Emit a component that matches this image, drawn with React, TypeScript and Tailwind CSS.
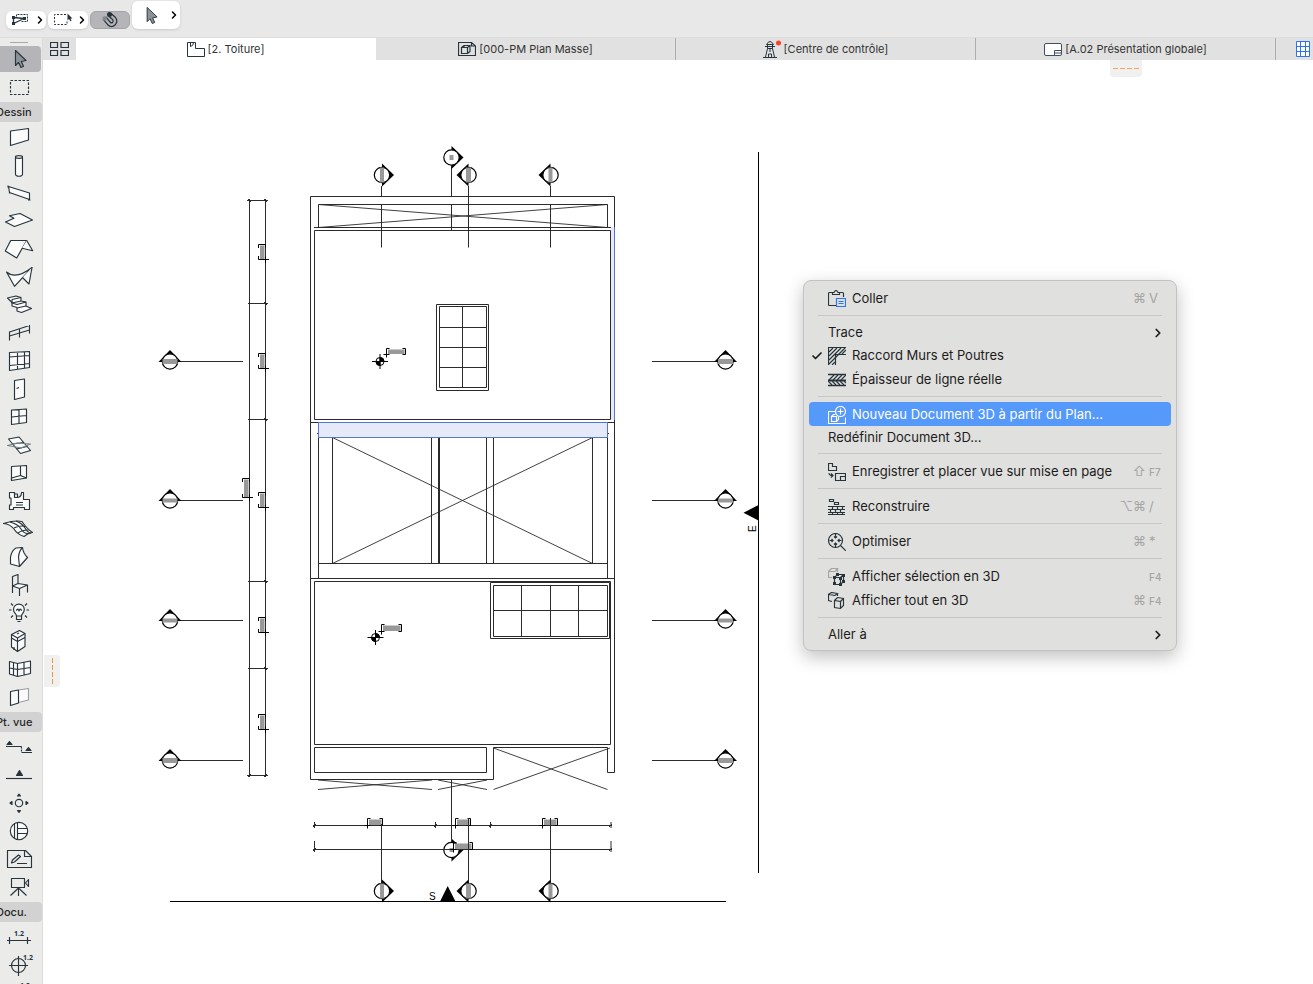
import type { ReactNode } from 'react'
import clsx from 'clsx'
import { ChevronRight, Check } from 'lucide-react'

const INK = '#27343b'

type Tool = { name: string; art: ReactNode; active?: boolean }

const arrowPath = 'M15.5 5.5V20.5L18.5 17.5L21 22.5L23.5 21.3L21.3 16.5L26 15.5Z'

const mainTools: Tool[] = [
  { name: 'Flèche', active: true, art: <path d={arrowPath} fill="#8b9398" /> },
  { name: 'Rectangle de sélection', art: <rect x="10.5" y="7.5" width="18" height="14" fill="none" strokeDasharray="2.5 1.5" /> }
]

const drawTools: Tool[] = [
  { name: 'Mur', art: <path d="M10.5 8L28.5 5.5V17L10.5 22.5Z" /> },
  { name: 'Poteau', art: <><path d="M15.5 6V23C15.5 26 22.5 26 22.5 23V6" /><ellipse cx="19" cy="6" rx="3.5" ry="1.4" /></> },
  { name: 'Poutre', art: <path d="M8.5 7.5L29.5 14V20.5L9.5 13.5ZM8 6.5V8.5M9.5 12.5V14.5M28 21H30.5" /> },
  { name: 'Dalle', art: <path d="M5.5 15L14.5 19.5L32.5 13L20 6.5L9.5 8.7L14 11.3Z" /> },
  { name: 'Toit', art: <><path d="M5.3 16L10.7 5.5H26.7L16.7 23Z" /><path d="M26.7 5.5L32.7 15.7L22 13.3" /></> },
  { name: 'Coque', art: <><path d="M6.5 9L14.5 23.3L32 4.5Q16 17 6.5 9Z" /><path d="M32 4.5L29 21L22.5 14.5" /></> },
  { name: 'Escalier', art: <><path d="M7.5 7L16 5L21 6.5V10L26 11V15L31.5 17.5L21.5 21.5L17 20V16.5L12 15V11.5L7.5 7Z" /><path d="M12 8.5L21 6.5M12 12L21 10M17 13.5L26 11M17 17L26 15M12 8.5V12L17 13.5" fill="none" /></> },
  { name: 'Garde-corps', art: <path d="M9.5 13L29.5 6.5M9.5 17L29.5 11M9.5 12.5V21.5M19.5 10V18.5M29.5 6V14.5" fill="none" /> },
  { name: 'Mur-rideau', art: <path d="M9.5 5.5L29.5 4.5V20.5L9.5 23.5ZM17.5 5V22M24.5 5V21M9.5 10L29.5 8.5M9.5 18.5L29.5 16.5" /> },
  { name: 'Porte', art: <path d="M14.5 5.5L24.5 4V22L14.5 24.5ZM16.5 13.5L19 12.5" /> },
  { name: 'Fenêtre', art: <path d="M11.5 7L26.5 6V19.5L11.5 21.5ZM19 6.5V20.5M11.5 14L26.5 12.5" /> },
  { name: 'Fenêtre de toit', art: <><path d="M8.5 8L19 6L30.5 19.5L20.5 22.5Z" /><path d="M12.5 13L24 11.5M16.5 18L27 15.5" fill="none" /><path d="M7.5 14.5L17 12L30.5 13L21 17Z" fill="none" stroke="#79848a" /></> },
  { name: 'Ouverture', art: <><path d="M11.5 7.5L26.5 6.5V19L11.5 21.5Z" /><path d="M20.5 7V16.5L11.5 19V21.5M20.5 16.5L26.5 19" fill="none" /></> },
  { name: 'Zone', art: <><path d="M9.5 5.5H14.5V10.500H17.500Q21.500 10 21.500 5.500H23.5V12.5H29.5V22.5H24.5V20.5H13.5V22.5H9.5V18H11V11H9.5Z" /><path d="M14.500 5.500V7H17.500V10.500M16 15.5H23M16 18H23" fill="none" /></> },
  { name: 'Maillage', art: <><path d="M3.5 8.5Q15 5 22 6.5Q27 14 32.5 17.5Q28 18 24 21.5Q17 19 14 14Q10 9 3.5 8.5Z" /><path d="M10 7Q18 9 21 14T28.5 18.5M16 6Q22 8 25 13T31 18M14 13Q20 10 25.5 11.5M18 18Q22 15 28.5 15" fill="none" /></> },
  { name: 'Forme', art: <><path d="M10.5 21V14Q12 7 16 5L22.5 4.5Q23 10 27.5 14.5L19.5 23.5Z" /><path d="M19.5 23.5L18.5 14Q19 8 22.5 4.5" fill="none" /></> },
  { name: 'Objet', art: <><path d="M12.5 15L18 12.500L27.500 14L19.500 17.500Z" /><path d="M12.500 22V5.500L18 3.500V12.500M19.5 17.5V25M27.5 14V21.5" fill="none" /></> },
  { name: 'Lampe', art: <><path d="M16.5 17C16.5 14.5 13.5 14 13.5 10.5A5.3 5.3 0 0 1 24.3 10.5C24.3 14 21.5 14.5 21.5 17Z" /><path d="M16.500 17V20.500H21.500V17M17.5 22.500H20.5M16 11.5L18 10L19 12L20 10L22 11.5M9 11H11.5M26.5 11H29M11 4.5L13 6.5M27 4.5L25 6.5M11 18.5L13 16.5M27 18.5L25 16.5" fill="none" /></> },
  { name: 'Équipement', art: <><path d="M11.5 7.5L19.5 3.5L25 6.5V19.5L17.5 24.5L11.5 20Z" /><path d="M11.5 7.5L17.5 11V24.5M17.5 11L25 6.5M11.5 11L17.5 14.5L25 10.5M17 7L19 6M14 20V23" fill="none" /></> },
  { name: 'Fenêtre d’angle', art: <path d="M9.5 6.5L17.5 8.5L30.5 6V18.5L17.5 21.5L9.5 19ZM17.5 8.5V21.5M13.5 7.5V20M24 7.5V20M9.5 13L17.5 14.5L30.5 12.5" /> },
  { name: 'Extrémité de mur', art: <><path d="M18.5 7L28.5 5.5V17L18.5 19.5" stroke="#98a0a4" /><path d="M10.5 8.5L18.5 7V20L10.5 22.5Z" /></> }
]

const viewTools: Tool[] = [
  { name: 'Coupe', art: <><path d="M6 13.5H21.5M21.5 19.5H32" /><path d="M21.5 13.5V19.5" strokeDasharray="2 1" /><path d="M7 11.5H12L9.5 8.5ZM26 17.5H31L28.5 14.5Z" fill={INK} /></> },
  { name: 'Façade', art: <><path d="M6 17.5H32" /><path d="M16.5 14.5H22.5L19.5 9.5Z" fill={INK} /></> },
  { name: 'Élévation intérieure', art: <><circle cx="19" cy="14" r="3.7" fill="none" /><path d="M17.5 7H20.5L19 5ZM17.5 21.5H20.5L19 23.5ZM12 12.5V15.5L10 14ZM26 12.5V15.5L28 14Z" fill={INK} /></> },
  { name: 'Détail', art: <><circle cx="19" cy="14" r="8.7" /><path d="M14.5 6.5V21.5M17.5 5.5V22.5M17.5 11.5H27.5M17.5 16.5H27.5" fill="none" /></> },
  { name: 'Feuille', art: <><path d="M7.5 5.5H25.5L31.5 11.5V22.5H7.5Z" fill="none" /><path d="M24.5 6V11.5H31M11.5 18L12.5 15L18.5 10L20.5 11.5L14.5 17ZM17 18.5H27" fill="none" /></> },
  { name: 'Caméra', art: <><path d="M11.5 5.5H24.5V14.5H11.5ZM28.5 6.5V13.5L25.5 10Z" fill="none" /><path d="M18.5 14.5V23M18.5 15L10.5 22.5M18.5 15L26.5 22.5" /></> }
]

const docTools: Tool[] = [
  { name: 'Cotation', art: <><path d="M7 17.5H31M9.5 14V21M27.5 14V21" /><Digits x={14} y={13} /></> },
  { name: 'Cote de niveau', art: <><circle cx="18.5" cy="14.5" r="7" fill="none" /><path d="M9 14.5H28M18.5 5V25" /><Digits x={23} y={9} /></> },
  { name: 'Cote radiale', art: <><Digits x={20} y={9} /><path d="M10 14H28" /></> }
]

function Digits({ x, y }: { x: number; y: number }) {
  return <text x={x} y={y} fill={INK} stroke="none" className="font-sans text-[7px] font-bold">1.2</text>
}

function ToolButton({ tool }: { tool: Tool }) {
  return (
    <button aria-label={tool.name} className="block h-7 w-full py-px">
      <span className={clsx('block h-[26px] w-[41px] rounded-r', tool.active && 'bg-[#b5b4b9]')}>
        <svg viewBox="0 1 40 26" className="h-[26px] w-10" fill="#fbfbfb" stroke={INK} strokeWidth="1.15" strokeLinejoin="round">
          {tool.art}
        </svg>
      </span>
    </button>
  )
}

function ToolGroup({ title, tools }: { title?: string; tools: Tool[] }) {
  return (
    <section>
      {title && (
        <h2 className="my-px flex h-5 w-[42px] items-center overflow-hidden rounded-r bg-[#d2d2d2] text-[11px] font-medium whitespace-nowrap text-[#262626]">
          <span className="-ml-1">{title}</span>
        </h2>
      )}
      {tools.map((tool) => <ToolButton key={tool.name} tool={tool} />)}
    </section>
  )
}

function Toolbar() {
  return (
    <header className="flex h-[38px] shrink-0 items-end gap-0.5 border-b border-[#dedede] bg-[#e8e8e8] pb-2 pl-1.5">
      <button aria-label="Sélection par éléments" className="flex h-[18px] w-10 items-center justify-between rounded-md bg-white pl-1.5 shadow-sm">
        <svg viewBox="0 0 17 14" className="h-3.5 w-[17px]" fill="none" stroke={INK}>
          <path d="M4.5 3.5V1.5H15.5V8.5H9" strokeDasharray="2 1" />
          <path d="M1.5 4.5L12 5.5L1.5 10.5Z" strokeWidth="1.3" />
          <path d="M0 3H3V6H0ZM0 9H3V12H0ZM11 4H14V7H11Z" fill={INK} stroke="none" />
        </svg>
        <ChevronRight className="size-3 text-black" strokeWidth={3} />
      </button>
      <button aria-label="Rectangle" className="flex h-[18px] w-10 items-center justify-between rounded-md bg-white pl-1.5 shadow-sm">
        <svg viewBox="0 0 19 14" className="h-3.5 w-[19px]" fill="none" stroke={INK}>
          <path d="M12 1.500H0.500V11.500H13V7" strokeDasharray="2 1.500" />
          <path d="M13.500 0.500V7.500L15 6L16.500 8.500L17.500 7.500L16.500 5.500H18.500Z" fill={INK} stroke="none" />
        </svg>
        <ChevronRight className="size-3 text-black" strokeWidth={3} />
      </button>
      <button aria-label="Aimant" className="flex h-[18px] w-10 items-center justify-center rounded-md border border-[#a5a4a9] bg-[#b5b4b9]">
        <svg viewBox="0 0 16 16" className="size-4" fill="none">
          <path d="M2.500 6L7 11.500Q9.500 14 12 11.500Q14 9 12 6.500L7.500 2.500" stroke={INK} strokeWidth="4.800" />
          <path d="M2.500 6L7 11.500Q9.500 14 12 11.500Q14 9 12 6.500L7.500 2.500" stroke="#b5b4b9" strokeWidth="2.300" />
          <circle cx="7.500" cy="2.500" r="2.500" fill={INK} />
          <circle cx="2.700" cy="6.500" r="2.300" fill="#85888d" />
        </svg>
      </button>
      <button aria-label="Flèche" className="flex h-7 w-12 items-center justify-between rounded-md bg-white pl-2 shadow-sm">
        <svg viewBox="8 4 20 20" className="size-[19px]" fill="#8b9398" stroke={INK}>
          <path d={arrowPath} />
        </svg>
        <ChevronRight className="size-3 text-black" strokeWidth={3} />
      </button>
    </header>
  )
}

const tabs = [
  {
    label: '[2. Toiture]',
    active: true,
    icon: (
      <svg viewBox="0 0 18 16" className="h-4 w-[18px]" fill="none" stroke={INK}>
        <path d="M0.500 1.500H8.500V7.500H17.500V15.500H0.500ZM3.500 1.500V5.500Q6.500 5 6.500 1.500" />
      </svg>
    )
  },
  {
    label: '[000-PM Plan Masse]',
    icon: (
      <svg viewBox="0 0 18 14" className="h-3.5 w-[18px]" fill="none" stroke={INK} strokeWidth="1.200">
        <path d="M0.500 0.500H13.500L17.500 4V13.500H0.500ZM13.500 0.500V4H17.500" />
        <path d="M3.500 5.500H9.500V11.500H3.500ZM3.500 5.500L6 3.500H12V9.500L9.500 11.500M9.500 5.500L12 3.500M6 3.500V5.500" />
      </svg>
    )
  },
  {
    label: '[Centre de contrôle]',
    icon: (
      <svg viewBox="0 0 18 18" className="h-[18px] w-[18px]" fill="none" stroke={INK}>
        <path d="M3.500 4.500Q7 -1.500 10.500 4.500ZM2 6.500H12M4.500 4.500V8.500H9.500V4.500M4.500 8.500L2.500 17M9.500 8.500L11.500 17M0 17.500H14M5.500 17V14H8.500V17M7 9V12" />
        <circle cx="15.500" cy="3" r="2.500" fill="#fb4129" stroke="none" />
      </svg>
    )
  },
  {
    label: '[A.02 Présentation globale]',
    icon: (
      <svg viewBox="0 0 18 14" className="h-3.5 w-[18px]" fill="#fff" stroke="#3f4d5c">
        <rect x="0.500" y="1.500" width="17" height="12" rx="1.500" />
        <path d="M10.500 13.500V8.500H17.500M10.500 11H17.500" />
      </svg>
    )
  }
]

function TabBar() {
  return (
    <nav className="flex h-[22px] shrink-0 bg-[#e1e1e1]">
      <button aria-label="Vue d’ensemble" className="flex w-[33px] items-center justify-center">
        <svg viewBox="0 0 19 14" className="h-3.5 w-[19px]" fill="none" stroke={INK} strokeWidth="1.200">
          <path d="M0.500 0.500H7.500V5.500H0.500ZM11 0.500H18.500V5.500H11ZM0.500 8.500H7.500V13.500H0.500ZM11 8.500H18.500V13.500H11Z" />
        </svg>
      </button>
      {tabs.map((tab) => (
        <a
          key={tab.label}
          href="#"
          className={clsx(
            'flex min-w-0 flex-1 items-center justify-center gap-[3px] border-r text-[11px] whitespace-nowrap text-[#333]',
            tab.active ? 'border-white bg-white' : 'border-[#adadad]'
          )}
        >
          {tab.icon}
          {tab.label}
        </a>
      ))}
      <button aria-label="Grille" className="flex w-[37px] items-center justify-end pr-0.5">
        <svg viewBox="0 0 16 16" className="size-4" fill="#fff" stroke="#2d74f5">
          <path d="M1.500 0.500H14.500V15.500H1.500ZM5.500 0.500V15.500M10.500 0.500V15.500M1.500 5.500H14.500M1.500 10.500H14.500" />
        </svg>
      </button>
    </nav>
  )
}

type Direction = 'up' | 'left' | 'right'

const arrows: Record<Direction, string> = {
  up: 'M-11.500 0.500H11.500L0 -11.500Z',
  right: 'M0 -11.500V11.500L12 0Z',
  left: 'M0 -11.500V11.500L-12 0Z'
}

// Section marker: black arrow, white disc, grey placeholder for its name
function Marker({ x, y, dir, w, h }: { x: number; y: number; dir: Direction; w: number; h: number }) {
  return (
    <g transform={`translate(${x} ${y})`}>
      <path d={arrows[dir]} fill="#000" stroke="none" />
      <circle r="7.700" fill="#fff" stroke="#000" strokeWidth="1.200" />
      <rect x={-w / 2} y={-h / 2} width={w} height={h} fill="#999" stroke="none" />
    </g>
  )
}

// Dimension text shown as a grey bar inside brackets
function Tag({ x, y, w, h, vertical }: { x: number; y: number; w: number; h: number; vertical?: boolean }) {
  return (
    <g stroke="#000">
      <rect x={x + 1.5} y={y + 1} width={w - 2.5} height={h - 1.5} fill="#999" stroke="none" />
      {vertical ? (
        <path d={`M${x} ${y + 3.5}V${y}H${x + w}V${y + 3} M${x} ${y + h - 3.5}V${y + h}H${x + w + 3.5}M${x + w} ${y + h - 3}V${y + h + 3.5}`} />
      ) : (
        <path d={`M${x + 3} ${y}H${x}V${y + h + 3} M${x - 3} ${y + h}H${x + 3} M${x + w - 3} ${y}H${x + w}V${y + h}H${x + w - 3}`} />
      )}
    </g>
  )
}

function LevelMark({ x, y }: { x: number; y: number }) {
  return (
    <g transform={`translate(${x} ${y})`} stroke="#000">
      <circle r="4" fill="#fff" />
      <path d="M0 0V-4A4 4 0 0 1 4 0ZM0 0V4A4 4 0 0 1 -4 0Z" fill="#000" />
      <path d="M-8 0H8M0 -7.500V7.500" />
    </g>
  )
}

const sectionRows = [
  { y: 361.5, h: 5 },
  { y: 500.5, h: 4 },
  { y: 620.5, h: 4 },
  { y: 760.5, h: 5 }
]

function FloorPlan() {
  return (
    <svg viewBox="43 60 1270 924" className="h-[924px] w-[1270px] max-w-none" fill="none" stroke="#2b2b2b">
      {/* selected walls */}
      <path d="M611 227H614V420H611Z" fill="#e5e9f8" stroke="none" />

      {/* outline and rooms */}
      <path d="M614.500 227V196.500H310.500V779.500H493.500V747.500H607.500V772.500H614.500V420" />
      <path d="M318.500 204.500H607.500V227.500H318.500ZM314 227.500H611M314.500 230.500H610.500V419.500H314.500ZM310 422.500H318M607 422.500H614" />
      <path d="M314.500 581.500H610.500V744.500H314.500ZM314.500 747.500H486.500V772.500H314.500ZM310 578.500H614" />
      <path d="M318.500 437V578M607.500 437V578M332.500 437V563M431.500 437V563M486.500 437V563M493.500 437V563M592.500 437V563M318 563.500H607M317 433.500H319M607 433.500H609" />
      <path d="M439 437V563" strokeWidth="2" />
      <path d="M318.500 204.500L607.500 227.500M318.500 227.500L607.500 204.500M332.500 437.500L592.500 563.500M332.500 563.500L592.500 437.500M318 780L432 789.500M318 789.500L432 780M438 780L487 789.500M438 789.500L487 780M493.500 748L607.500 789.500M493.500 789.500L610 748" strokeWidth="0.900" />

      {/* skylights */}
      <path d="M436.500 304.500H488.500V390.500H436.500ZM439.500 306.500H486.500V387.500H439.500ZM462.500 306.500V387.500M439.500 327.500H486.500M439.500 347.500H486.500M439.500 367.500H486.500" />
      <path d="M490.500 582.500H609.500V638.500H490.500ZM493.500 585.500H607.500V636.500H493.500ZM521.500 585.500V636.500M550.500 585.500V636.500M578.500 585.500V636.500M493.500 610.500H607.500" />

      <rect x="318.500" y="422.500" width="289" height="15" fill="#e5e9f8" stroke="#5577d2" />
      <path d="M614.500 227V420" stroke="#5577d2" />

      {/* section lines */}
      <path d="M381.500 186V196M381.500 204V247.500M451.500 166V196M451.500 204V230M468.500 186V247.500M550.500 186V196M550.500 204V247.500" />

      {/* dimension chains */}
      <path d="M249.500 199V777M265.500 199V777M247 200.500H268M248 303.500H268M248 419.500H268M248 581.500H268M248 668.500H268M247 775.500H268" />
      <path d="M248 199L251 202M264 199L267 202M264 302L267 305M264 418L267 421M264 580L267 583M264 667L267 670M248 777L251 774M264 777L267 774" />
      <path d="M313 825.500H612M314.500 822V828M435.500 822V828M490.500 822V828M611 822V828M313 849.500H612M314.500 841V852M611 841V852" />
      <path d="M313 827L316 824M434 827L437 824M489 827L492 824M609 827L612 824M313 851L316 848M609 851L612 848" />
      {[244.5, 353.5, 492.5, 617.5, 714.5].map((y) => <Tag key={y} x={258.5} y={y} w={7} h={15} vertical />)}
      <Tag x={242.5} y={478.5} w={7} h={19} vertical />

      {sectionRows.map(({ y, h }) => (
        <g key={y}>
          <path d={`M180 ${y}H243M652 ${y}H716`} />
          <Marker x={170} y={y} dir="up" w={15} h={h} />
          <Marker x={725.5} y={y} dir="up" w={15} h={h} />
        </g>
      ))}
      <Marker x={451.5} y={157.5} dir="right" w={4} h={5} />
      <Marker x={382} y={175} dir="right" w={4} h={15} />
      <Marker x={468.5} y={175} dir="left" w={5} h={15} />
      <Marker x={550.5} y={175} dir="left" w={4} h={15} />
      <Marker x={451.5} y={850} dir="right" w={4} h={4} />
      <path d="M443 849.500H463" />
      <Tag x={453.5} y={842.5} w={19} h={7} />
      {[367.5, 455.5, 542.5].map((x) => <Tag key={x} x={x} y={818.5} w={15} h={7} />)}
      <path d="M451.500 780V842M381.500 824V884M468.500 818V884M550.500 818V884" />
      <Marker x={382} y={891} dir="right" w={4} h={15} />
      <Marker x={468.5} y={891} dir="left" w={5} h={15} />
      <Marker x={550.5} y={891} dir="left" w={4} h={15} />

      <LevelMark x={380} y={361.5} />
      <Tag x={386.5} y={348.5} w={19} h={6} />
      <LevelMark x={375.5} y={637.5} />
      <Tag x={381.5} y={624.5} w={20} h={7} />

      {/* elevation lines */}
      <path d="M170 901.500H726M758.500 152V873" stroke="#000" />
      <path d="M440 901.500H455.500L447.700 886ZM758.500 505V520.500L743.500 512.700Z" fill="#000" stroke="none" />
      <g fill="#000" stroke="none" className="font-['Liberation_Sans'] text-[10px]">
        <text x="429" y="900">S</text>
        <text x="756" y="532" transform="rotate(-90 756 532)">E</text>
      </g>
    </svg>
  )
}

const menuIcons = {
  paste: (
    <>
      <path d="M8 15.500H1.500Q0.500 15.500 0.500 14.500V3.500Q0.500 2.500 1.500 2.500H4.500M11.500 2.500H14.500Q15.500 2.500 15.500 3.500V7M4.500 4.500V2.500H6Q8 -1.500 10 2.500H11.500V4.500Z" />
      <path d="M8.500 8.500H17.500V16.500H8.500ZM10.500 11.500H15.500M10.500 13.500H15.500" stroke="#2d74f5" />
    </>
  ),
  junction: (
    <>
      <path d="M0.500 18V0.500H18M7.500 18V7.500H18" />
      <path d="M1 5L5 1M1 9L9 1M1 13L13 1M1 17L17 1M4 18L7 15M11 7L17 1M14 7L18 3" />
    </>
  ),
  lineWeight: (
    <>
      <path d="M0 3.500H18M0 14.500H18" strokeWidth="1.500" />
      <path d="M0 9.500H18" strokeWidth="2" />
      <path d="M1 9L6 4M5 9L10 4M9 9L14 4M13 9L18 4M0 10L4 14M4 10L8 14M8 10L12 14M12 10L16 14M16 10L18 12" />
    </>
  ),
  newDoc: (
    <>
      <path d="M7 5.500H0.500V17.500H17.500V11.500M3.500 10.500H8.500V15.500H3.500ZM3.500 10.500L5.500 8.500H7.500M8.500 15.500L10.500 13.500V11" />
      <circle cx="12.500" cy="5.500" r="5" />
      <path d="M12.500 2.500V8.500M9.500 5.500H15.500" />
    </>
  ),
  saveView: (
    <>
      <path d="M0.500 0.500H4.500V3.500H8.500V7.500H0.500ZM7.500 10.500H17.500V17.500H7.500ZM12.500 17.500V13.500H17.500" />
      <path d="M1 10Q1 12.500 4.500 12.500M3 10.500L5 12.500L3 14.500" />
    </>
  ),
  rebuild: (
    <path d="M1.500 1.500H5.500V3.500H1.500ZM6.500 4.500H10.500V6.500H6.500ZM0 8.500H17M0 11.500H17M0 14.500H17M0 16.500H17M4.500 8V11M9.500 8V11M14.500 8V11M2.500 11V14M7.500 11V14M12.500 11V14M4.500 14V17M9.500 14V17M14.500 14V17" />
  ),
  fit: (
    <>
      <circle cx="7.500" cy="7.500" r="7" />
      <path d="M12.500 12.500L18 18M7.500 1V5M6 3.500L7.500 5L9 3.500M7.500 14V10M6 11.500L7.500 10L9 11.500M1.500 7.500H5M3.500 6L5 7.500L3.500 9M13.500 7.500H10M11.500 6L10 7.500L11.500 9" />
    </>
  ),
  showSelection: (
    <>
      <path d="M0.500 3.500L3.500 0.500H9.500L7 3.500H0.500V9.500H4M9.500 0.500V4" stroke="#a4a4a4" />
      <path d="M6.500 9.500L9.500 6.500H15.500V13.500L12.500 16.500H6.500ZM6.500 9.500H12.500V16.500M12.500 9.500L15.500 6.500" />
      <path d="M5 8H8V11H5ZM8 5H11V8H8ZM14 6H17V9H14ZM11 9H14V12H11ZM5 14H8V17H5ZM11 15H14V18H11ZM14 12H17V15H14Z" fill={INK} stroke="none" />
    </>
  ),
  showAll: (
    <path d="M0.500 2.500L3.500 0.500L9.500 1.500L7 3.500L0.500 2.500V8.500L4 9.500M9.500 1.500V4M6.500 8.500L9.500 5.500L15.500 6.500V13.500L12.500 16.500L6.500 15.500ZM6.500 8.500L12.500 9.500V16.500M12.500 9.500L15.500 6.500" />
  )
}

type MenuEntry = {
  label: string
  icon?: keyof typeof menuIcons
  mods?: string
  keyName?: string
  checked?: boolean
  submenu?: boolean
  active?: boolean
}

const menuSections: MenuEntry[][] = [
  [{ label: 'Coller', icon: 'paste', mods: '⌘', keyName: 'V' }],
  [
    { label: 'Trace', submenu: true },
    { label: 'Raccord Murs et Poutres', icon: 'junction', checked: true },
    { label: 'Épaisseur de ligne réelle', icon: 'lineWeight' }
  ],
  [
    { label: 'Nouveau Document 3D à partir du Plan...', icon: 'newDoc', active: true },
    { label: 'Redéfinir Document 3D...' }
  ],
  [{ label: 'Enregistrer et placer vue sur mise en page', icon: 'saveView', mods: '⇧', keyName: 'F7' }],
  [{ label: 'Reconstruire', icon: 'rebuild', mods: '⌥⌘', keyName: '/' }],
  [{ label: 'Optimiser', icon: 'fit', mods: '⌘', keyName: '*' }],
  [
    { label: 'Afficher sélection en 3D', icon: 'showSelection', keyName: 'F4' },
    { label: 'Afficher tout en 3D', icon: 'showAll', mods: '⌘', keyName: 'F4' }
  ],
  [{ label: 'Aller à', submenu: true }]
]

function MenuItem({ entry }: { entry: MenuEntry }) {
  return (
    <button
      role="menuitem"
      className={clsx(
        'flex w-full items-center rounded pt-0.5 pr-[9px] text-left text-[13px] whitespace-nowrap',
        entry.icon ? 'h-6' : 'h-[22px]',
        entry.active ? 'bg-[#5599fa] text-white' : 'text-[#1c1c1c]'
      )}
    >
      <span className="flex w-[19px] shrink-0 pl-0.5">
        {entry.checked && <Check className="size-3" strokeWidth={3.5} />}
      </span>
      {entry.icon && (
        <svg viewBox="0 0 18 18" className="mr-1.5 size-[18px] shrink-0" fill="none" stroke={entry.active ? '#fff' : INK} strokeWidth="1.150">
          {menuIcons[entry.icon]}
        </svg>
      )}
      <span className="flex-1">{entry.label}</span>
      {entry.keyName && (
        <span className="flex items-center gap-[3px] text-[#a5a5a4]">
          <span>{entry.mods}</span>
          <span className={clsx('w-[13px]', entry.keyName.length > 1 && 'text-[10px] font-medium')}>{entry.keyName}</span>
        </span>
      )}
      {entry.submenu && <ChevronRight className="-mr-[3px] size-3.5" strokeWidth={3} />}
    </button>
  )
}

function ContextMenu() {
  return (
    <div role="menu" className="absolute top-[220px] left-[760px] w-[374px] rounded-lg border border-[#c3c3c3] bg-[#e0e0de] p-[5px] shadow-[0_6px_18px_rgba(0,0,0,0.25)]">
      {menuSections.map((section, index) => (
        <div key={section[0].label}>
          {index > 0 && <hr className="mx-[9px] my-[5px] border-[#c6c6c5]" />}
          {section.map((entry) => <MenuItem key={entry.label} entry={entry} />)}
        </div>
      ))}
    </div>
  )
}

export default function App() {
  return (
    <div className="flex h-screen flex-col overflow-hidden bg-white font-[Inter,'Liberation_Sans','DejaVu_Sans',sans-serif]">
      <Toolbar />
      <div className="flex min-h-0 flex-1">
        <aside className="w-[43px] shrink-0 overflow-hidden border-r border-[#dcdcdc] bg-[#ebebea]">
          <div className="h-[7px] pt-1 pl-2.5">
            <div className="h-px w-[18px] bg-[#a8a8a8]" />
          </div>
          <ToolGroup tools={mainTools} />
          <ToolGroup title="Dessin" tools={drawTools} />
          <ToolGroup title="Pt. vue" tools={viewTools} />
          <ToolGroup title="Docu." tools={docTools} />
        </aside>
        <div className="flex min-w-0 flex-1 flex-col">
          <TabBar />
          <main className="relative min-h-0 flex-1 overflow-hidden">
            <FloorPlan />
            {/* palette docking handles */}
            <div className="absolute top-0 right-[171px] flex h-[17px] w-8 items-center justify-center rounded-b bg-[#f0f0f0]">
              <svg viewBox="0 0 26 1" className="h-px w-[26px]" stroke="#f7a35c">
                <path d="M0 0.500H26" strokeDasharray="5 2" />
              </svg>
            </div>
            <div className="absolute top-[595px] left-px flex h-8 w-4 items-center justify-center rounded-r bg-[#f0f0f0]">
              <svg viewBox="0 0 1 26" className="h-[26px] w-px" stroke="#f7943e">
                <path d="M0.500 0V26" strokeDasharray="5 2" />
              </svg>
            </div>
            <ContextMenu />
          </main>
        </div>
      </div>
    </div>
  )
}
